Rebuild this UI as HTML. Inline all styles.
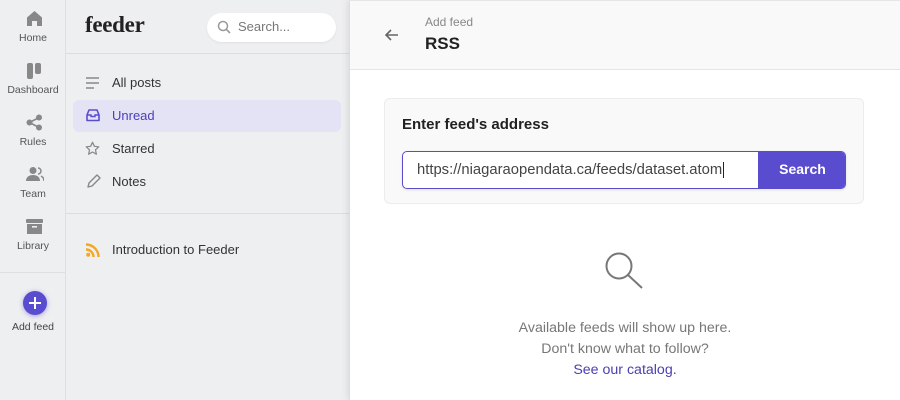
<!DOCTYPE html><html><head><style>
*{margin:0;padding:0;box-sizing:border-box}
body{width:900px;height:400px;overflow:hidden;background:#eeeff1;font-family:"Liberation Sans",sans-serif;position:relative;color:#333}
.a{position:absolute}
.rl{position:absolute;left:0;width:66px;text-align:center;font-size:10.5px;color:#555}
.ni{position:absolute;left:112px;font-size:13px;color:#333}
.ic{position:absolute}
</style></head><body>
<div class="a" style="left:0;top:0;width:66px;height:400px;border-right:1px solid #dedfe2"></div>
<svg class="ic" style="left:26px;top:10px" width="17" height="17" viewBox="0 0 17 17"><path d="M8.5 1L1 7.5V16h5v-5h5v5h5V7.5z" fill="#888"/></svg>
<div class="rl" style="top:32px">Home</div>
<svg class="ic" style="left:27px;top:63px" width="15" height="16"><rect x="0" y="0" width="6" height="16" rx="2" fill="#888"/><rect x="8" y="0" width="6" height="11" rx="2" fill="#888"/></svg>
<div class="rl" style="top:84px">Dashboard</div>
<svg class="ic" style="left:26px;top:114px" width="17" height="17"><circle cx="13" cy="3.5" r="3" fill="#888"/><circle cx="3.5" cy="8.5" r="3" fill="#888"/><circle cx="13" cy="13.5" r="3" fill="#888"/><path d="M13 3.5L3.5 8.5L13 13.5" stroke="#888" stroke-width="1.6" fill="none"/></svg>
<div class="rl" style="top:136px">Rules</div>
<svg class="ic" style="left:26px;top:166px" width="18" height="16"><circle cx="7" cy="4.5" r="3.5" fill="#888"/><path d="M0 15c0-4 3-6 7-6s7 2 7 6z" fill="#888"/><path d="M12 2a3 3 0 010 6M15 10c2 1 3 3 3 5" stroke="#888" stroke-width="1.5" fill="none"/></svg>
<div class="rl" style="top:188px">Team</div>
<svg class="ic" style="left:26px;top:219px" width="17" height="16"><rect x="0" y="0" width="17" height="4" rx="1" fill="#888"/><path d="M1 5h15v10H1z" fill="#888"/><rect x="6" y="7" width="5" height="1.6" fill="#eee"/></svg>
<div class="rl" style="top:240px">Library</div>
<div class="a" style="left:0;top:272px;width:66px;border-top:1px solid #dedfe2"></div>
<div class="a" style="left:23px;top:291px;width:24px;height:24px;border-radius:50%;background:#5a4ccf;box-shadow:0 1px 5px rgba(90,76,207,.5)"></div>
<svg class="ic" style="left:27px;top:295px" width="16" height="16"><path d="M8 2v12M2 8h12" stroke="#fff" stroke-width="2"/></svg>
<div class="rl" style="top:321px;color:#444">Add feed</div>

<div class="a" style="left:85px;top:12px;font-family:'Liberation Serif',serif;font-weight:bold;font-size:23px;color:#222;letter-spacing:-0.3px">feeder</div>
<div class="a" style="left:207px;top:13px;width:129px;height:29px;background:#fff;border-radius:15px;box-shadow:0 1px 2px rgba(0,0,0,.06)"></div>
<svg class="ic" style="left:217px;top:20px" width="14" height="14"><circle cx="6" cy="6" r="4.5" stroke="#999" stroke-width="1.5" fill="none"/><path d="M9.3 9.3L13 13" stroke="#999" stroke-width="1.6"/></svg>
<div class="a" style="left:238px;top:19px;font-size:13px;color:#777">Search...</div>
<div class="a" style="left:66px;top:53px;width:283px;border-top:1px solid #dcdde0"></div>
<svg class="ic" style="left:86px;top:77px" width="14" height="12"><path d="M0 1h13M0 6h13M0 11h8" stroke="#888" stroke-width="1.4"/></svg>
<div class="ni" style="top:75px">All posts</div>
<div class="a" style="left:73px;top:100px;width:268px;height:32px;background:#e4e3f5;border-radius:6px"></div>
<svg class="ic" style="left:86px;top:109px" width="14" height="13"><path d="M1 6L3 1h8l2 5v5.5H1z" stroke="#5a4ccf" stroke-width="1.6" fill="none" stroke-linejoin="round"/><path d="M1 6h4v1.5h4V6h4" stroke="#5a4ccf" stroke-width="1.4" fill="none"/></svg>
<div class="ni" style="top:108px;color:#4a3fb8">Unread</div>
<svg class="ic" style="left:85px;top:141px" width="15" height="15" viewBox="0 0 24 24"><path d="M12 2l3 6.5 7 .8-5.2 4.8 1.4 7L12 17.6 5.8 21.1l1.4-7L2 9.3l7-.8z" stroke="#888" stroke-width="2" fill="none" stroke-linejoin="round"/></svg>
<div class="ni" style="top:141px">Starred</div>
<svg class="ic" style="left:86px;top:174px" width="15" height="15"><path d="M2 13l1-4 8-8 3 3-8 8z" stroke="#888" stroke-width="1.4" fill="none" stroke-linejoin="round"/></svg>
<div class="ni" style="top:174px">Notes</div>
<div class="a" style="left:66px;top:213px;width:283px;border-top:1px solid #dcdde0"></div>
<svg class="ic" style="left:86px;top:243px" width="14" height="14"><circle cx="2.2" cy="11.8" r="2" fill="#f5a623"/><path d="M0 6.5a7.5 7.5 0 017.5 7.5M0 1.5a12.5 12.5 0 0112.5 12.5" stroke="#f5a623" stroke-width="2.4" fill="none"/></svg>
<div class="ni" style="top:242px">Introduction to Feeder</div>

<div class="a" style="left:349px;top:0;width:551px;height:400px;background:#fff;box-shadow:-2px 0 6px rgba(0,0,0,.08);border-left:1px solid #ddd;border-top:1px solid #e6e6e6"></div>
<div class="a" style="left:350px;top:1px;width:550px;height:69px;background:#f9f9f9;border-bottom:1px solid #e5e5e5"></div>
<svg class="ic" style="left:385px;top:29px" width="14" height="12"><path d="M13 6H1.5M6 1L1 6l5 5" stroke="#666" stroke-width="1.6" fill="none"/></svg>
<div class="a" style="left:425px;top:15px;font-size:12px;color:#888">Add feed</div>
<div class="a" style="left:425px;top:34px;font-size:17px;font-weight:bold;color:#222">RSS</div>
<div class="a" style="left:384px;top:98px;width:480px;height:106px;background:#f9f9f9;border:1px solid #ececec;border-radius:6px"></div>
<div class="a" style="left:402px;top:116px;font-size:15px;font-weight:bold;color:#222">Enter feed's address</div>
<div class="a" style="left:402px;top:151px;width:444px;height:38px;border:1.5px solid #5a4ccf;border-radius:5px;background:#fff;overflow:hidden;box-shadow:0 1px 3px rgba(0,0,0,.1)">
<div class="a" style="left:14px;top:10px;font-size:14.8px;color:#444;white-space:nowrap">https://niagaraopendata.ca/feeds/dataset.atom<span style="border-left:1px solid #222;margin-left:1px"></span></div>
<div class="a" style="left:355px;top:-1px;width:89px;height:38px;background:#5a4ccf;color:#fff;font-weight:bold;font-size:14px;text-align:center;line-height:37px">Search</div>
</div>
<svg class="ic" style="left:603px;top:250px" width="42" height="40"><circle cx="16" cy="16" r="12.5" stroke="#777" stroke-width="2" fill="none"/><path d="M25 25l14 13" stroke="#777" stroke-width="2"/></svg>
<div class="a" style="left:350px;top:318px;width:550px;text-align:center;font-size:14.2px;line-height:21px;color:#777">Available feeds will show up here.<br>Don't know what to follow?<br><span style="color:#4a3fb0">See our catalog.</span></div>
</body></html>
